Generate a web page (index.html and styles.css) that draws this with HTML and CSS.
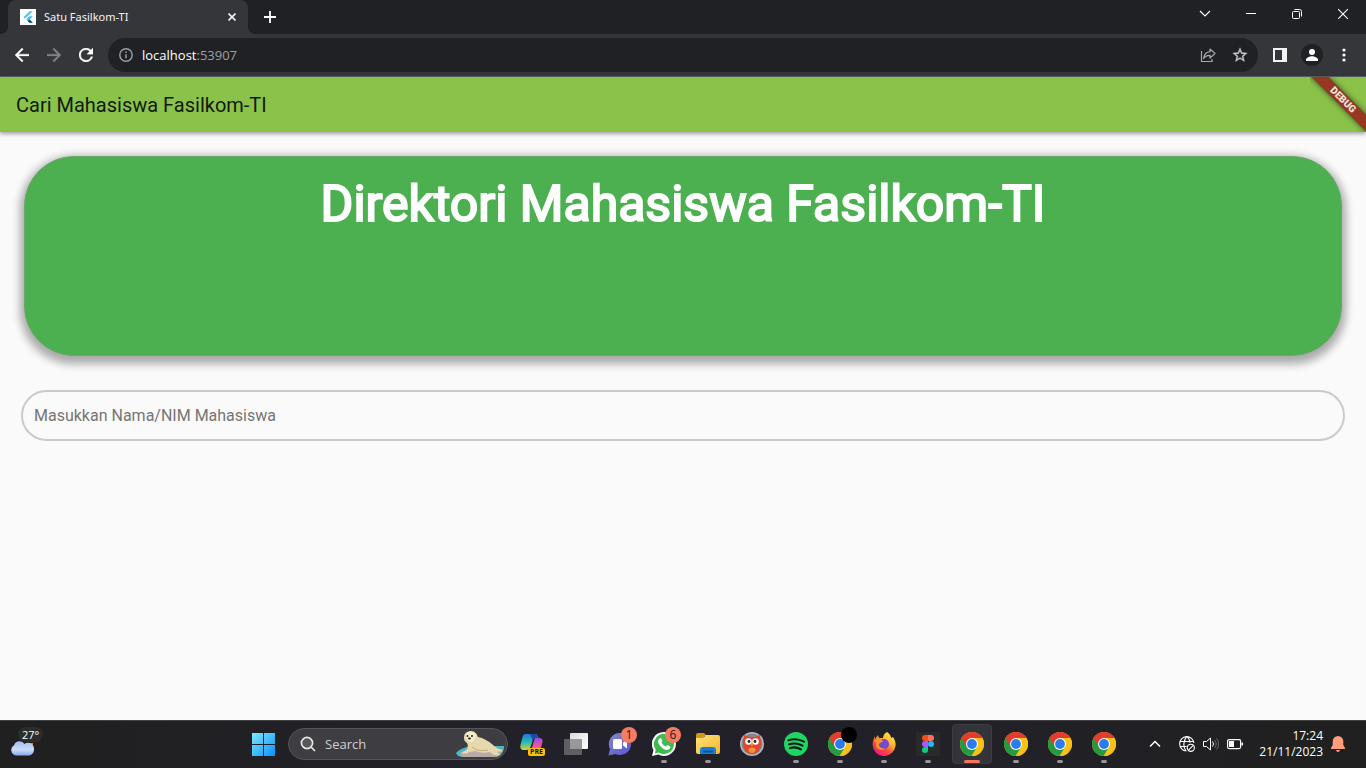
FILE: index.html
```html
<!DOCTYPE html>
<html lang="id">
<head>
<meta charset="utf-8">
<meta name="viewport" content="width=device-width, initial-scale=1">
<title>Satu Fasilkom-TI</title>
<link rel="stylesheet" href="styles.css">
</head>
<body>
<svg class="defs" aria-hidden="true">
  <symbol id="chrome" viewBox="0 0 24 24">
    <circle cx="12" cy="12" r="12" fill="#fbc116"/>
    <path d="M12 12 1.600 6A12 12 0 0 0 11.500 24L17.200 15z" fill="#249a41"/>
    <path d="M1.600 6A12 12 0 0 1 22.400 6H12L6.800 15z" fill="#e33b2e"/>
    <path d="M12 6H22.400A12 12 0 0 1 12 24L17.200 15z" fill="#fbc116"/>
    <circle cx="12" cy="12" r="6" fill="#fff"/>
    <circle cx="12" cy="12" r="4.900" fill="#2a7bee"/>
  </symbol>
</svg>

<header class="browser">
  <div class="tabstrip">
    <div class="tab">
      <svg class="favicon" viewBox="0 0 16 16"><rect width="16" height="16" fill="#fff"/><path d="M9.500 2.200h3.300L5 9.800 3.400 8.200z" fill="#54c5f8"/><path d="M9.500 7.300h3.300L9.500 10.600l3.300 3.200H9.500L6.300 10.600z" fill="#40b8f5"/><path d="M7.900 12.200l1.600-1.600 3.300 3.200H9.500z" fill="#12467f"/></svg>
      <span class="tab-title">Satu Fasilkom-TI</span>
      <button class="tab-close" aria-label="Close tab"><svg width="8" height="8" viewBox="0 0 8 8"><path d="M.5.500l7 7M7.500.500l-7 7" stroke="#f1f3f4" stroke-width="1.600"/></svg></button>
    </div>
    <button class="new-tab" aria-label="New tab"><svg width="12" height="12" viewBox="0 0 12 12"><path d="M6 0v12M0 6h12" stroke="#fff" stroke-width="1.800"/></svg></button>
    <div class="window-controls">
      <button aria-label="Search tabs"><svg width="12" height="12" viewBox="0 0 12 12"><path d="M1 3l5 5 5-5" fill="none" stroke="#fff" stroke-width="1.200"/></svg></button>
      <button aria-label="Minimize"><svg width="10" height="10" viewBox="0 0 10 10"><path d="M0 4.500h10" stroke="#fff"/></svg></button>
      <button aria-label="Restore"><svg width="10" height="10" viewBox="0 0 10 10" fill="none" stroke="#fff"><rect x=".5" y="2.500" width="7" height="7" rx="1"/><path d="M2.500.500H7.500a2 2 0 0 1 2 2v5"/></svg></button>
      <button aria-label="Close"><svg width="10" height="10" viewBox="0 0 10 10"><path d="M0 0l10 10M10 0L0 10" stroke="#fff" stroke-width="1.100"/></svg></button>
    </div>
  </div>
  <div class="toolbar">
    <nav class="nav-buttons">
      <button aria-label="Back"><svg width="14" height="14" viewBox="4 4 16 16"><path fill="#fff" stroke="#fff" stroke-width=".4" d="M20 11H7.830l5.590-5.590L12 4l-8 8 8 8 1.410-1.410L7.830 13H20z"/></svg></button>
      <button aria-label="Forward"><svg width="14" height="14" viewBox="4 4 16 16"><path fill="#818285" stroke="#818285" stroke-width=".4" d="M4 13h12.170l-5.590 5.590L12 20l8-8-8-8-1.410 1.410L16.170 11H4z"/></svg></button>
      <button aria-label="Reload"><svg width="14" height="14" viewBox="4 4 16 16"><path fill="#fff" stroke="#fff" stroke-width=".4" d="M17.650 6.350A8 8 0 1 0 19.730 14h-2.080A6 6 0 1 1 12 6c1.660 0 3.140.690 4.220 1.780L13 11h7V4z"/></svg></button>
    </nav>
    <div class="omnibox">
      <svg width="14" height="14" viewBox="0 0 14 14"><circle cx="7" cy="7" r="6.200" fill="none" stroke="#9aa0a6" stroke-width="1.400"/><path d="M7 6.200v4M7 3.500v1.500" stroke="#9aa0a6" stroke-width="1.500"/></svg>
      <span class="url">localhost<span class="port">:53907</span></span>
      <button aria-label="Share"><svg width="16" height="16" viewBox="0 0 16 16" fill="none" stroke="#a6a8ab" stroke-width="1.200"><path d="M1.500 4v10.500h10.500V12"/><path d="M10 2l5 4.500-5 4.500V8.300C7 8.200 5 9 3.600 11.500 4.200 7.500 6.500 5 10 4.700z" stroke-linejoin="round"/></svg></button>
      <button aria-label="Bookmark"><svg width="16" height="16" viewBox="1 1 22 22"><path fill="#c4c6c8" stroke="#c4c6c8" stroke-width=".5" d="M22 9.240l-7.190-.62L12 2 9.190 8.630 2 9.240l5.460 4.730L5.820 21 12 17.270 18.180 21l-1.630-7.030zM12 15.400l-3.760 2.270 1-4.280-3.320-2.880 4.380-.38L12 6.100l1.710 4.040 4.380.38-3.320 2.880 1 4.280z"/></svg></button>
    </div>
    <div class="tools">
      <button aria-label="Side panel"><svg width="14" height="14" viewBox="0 0 14 14"><path fill="#f1f3f4" fill-rule="evenodd" d="M0 0h14v14H0zM2 2v10h7V2z"/></svg></button>
      <button aria-label="Profile"><svg width="22" height="22" viewBox="0 0 22 22"><circle cx="11" cy="11" r="11" fill="#202124"/><circle cx="11" cy="8" r="3" fill="#fff"/><path d="M5 17v-1.500c0-2 4-3.300 6-3.300s6 1.300 6 3.300V17z" fill="#fff"/></svg></button>
      <button aria-label="Menu"><svg width="4" height="14" viewBox="0 0 4 14" fill="#fff"><circle cx="2" cy="2" r="1.600"/><circle cx="2" cy="7" r="1.600"/><circle cx="2" cy="12" r="1.600"/></svg></button>
    </div>
  </div>
</header>

<div class="app">
  <header class="app-bar">
    <h1 class="app-title">Cari Mahasiswa Fasilkom-TI</h1>
    <div class="debug-corner"><span class="debug-banner">DEBUG</span></div>
  </header>
  <main class="content">
    <section class="hero"><h2 class="hero-title">Direktori Mahasiswa Fasilkom-TI</h2></section>
    <input class="search-field" type="text" aria-label="Masukkan Nama/NIM Mahasiswa" placeholder="Masukkan Nama/NIM Mahasiswa">
  </main>
</div>

<footer class="taskbar">
  <button class="weather" aria-label="Weather">
    <svg width="24" height="16" viewBox="0 0 24 16"><defs><linearGradient id="cl" x2="0" y2="1"><stop offset="0" stop-color="#a5bdf0"/><stop offset=".6" stop-color="#cbdcf8"/><stop offset="1" stop-color="#84a9ee"/></linearGradient></defs><path d="M15 3h8v5z" fill="#e9832f"/><path d="M6 15.500A5.500 5.500 0 0 1 4 5.300 5.800 5.800 0 0 1 14.500 4 6 6 0 0 1 24 9.500c0 3.500-2.500 6-5.500 6z" fill="url(#cl)"/></svg>
    <span class="temp">27°</span>
  </button>
  <div class="dock">
    <button class="dock-item" aria-label="Start"><svg width="24" height="24" viewBox="0 0 24 24"><defs><linearGradient id="win" x2="1" y2="1"><stop offset="0" stop-color="#7cebff"/><stop offset="1" stop-color="#0a90f8"/></linearGradient></defs><path fill="url(#win)" d="M0 1h11v11H0zM12 1h11v11H12zM0 13h11v11H0zM12 13h11v11H12z"/></svg></button>
    <label class="search">
      <svg width="16" height="16" viewBox="0 0 16 16" fill="none" stroke="#e6e6e6" stroke-width="1.700"><circle cx="7" cy="7" r="5.600" fill="#56575b"/><path d="M11 11l4 4"/></svg>
      <input class="search-input" type="text" placeholder="Search">
      <svg class="seal" width="50" height="28" viewBox="0 0 50 28"><path d="M1 23c5-6 14-7 24-7h24v2c-1 5-4 9-9 9H8c-3 0-6-1-7-4z" fill="#47b6c9"/><path d="M5 23c5-3 20-5 43-4-2 5-4 8-9 8H10c-3 0-5-1-5-4z" fill="#b9aaa8"/><path d="M9 8c0-5 3-7 7-7s6 3 7 6c5 1 11 4 15 8 3 3 7 4 10 6-2 1-5 0-6 1 1 1 4 2 2 3-4 1-7-1-9-3-5 1-11 1-14-1l-7 1c-1 2-6 2-7 1s4-2 5-4c1-3 1-4 0-6-2-1-3-3-3-5z" fill="#e7d8ad"/><path d="M11 5c1-4 8-4 10 0-1 4-2 7-6 7-3-1-4-4-4-7z" fill="#f6edcf"/><path d="M17 17c4 4 10 4 16 3" stroke="#bfa973" fill="none"/><circle cx="12.500" cy="6" r="1" fill="#28221c"/><circle cx="17" cy="6" r="1" fill="#28221c"/><ellipse cx="14.500" cy="8.600" rx="1.500" ry="1" fill="#28221c"/></svg>
    </label>
    <button class="dock-item" aria-label="Copilot"><svg width="24" height="24" viewBox="0 0 24 24"><defs><linearGradient id="ca" x2="0" y2="1"><stop stop-color="#2476d8"/><stop offset=".5" stop-color="#22bbb4"/><stop offset="1" stop-color="#d6d03a"/></linearGradient><linearGradient id="cb" x2="0" y2="1"><stop stop-color="#9d4be4"/><stop offset=".6" stop-color="#ec5798"/><stop offset="1" stop-color="#fb8d50"/></linearGradient></defs><path d="M11 18l4-12h4c3 0 4 2 3.500 4l-2 7c-1 2-2 3-4 3h-7z" fill="url(#cb)"/><path d="M5.500 2h10c2 0 2 2 3 4h-3c-2 0-2.500 1-3 3l-2 6c-1 2-2 3-4 3H4c-3 0-4-2-3.500-5L2.500 5c.5-2 1.500-3 3-3z" fill="url(#ca)"/><path d="M10 2h5c2 0 2.500 2 3 4h-2c-2 0-2.500 1-3 3z" fill="#2148b8"/></svg><span class="pre">PRE</span></button>
    <button class="dock-item" aria-label="Task view"><svg width="24" height="24" viewBox="0 0 24 24"><defs><linearGradient id="tv" x2="1" y2="1"><stop stop-color="#ddd"/><stop offset="1" stop-color="#fff"/></linearGradient></defs><rect x="6" y="1" width="18" height="16" rx="1" fill="url(#tv)"/><rect y="7" width="18" height="16" rx="1" fill="#5f5f61"/><rect x="6" y="7" width="12" height="10" fill="#999"/></svg></button>
    <button class="dock-item" aria-label="Chat"><svg width="24" height="24" viewBox="0 0 24 24"><defs><linearGradient id="ch" x2="1" y2="1"><stop stop-color="#8787c8"/><stop offset="1" stop-color="#5555d2"/></linearGradient></defs><path d="M12 1a11 11 0 1 1-4.500 21L.500 23.500 2 17A11 11 0 0 1 12 1z" fill="url(#ch)"/><rect x="5" y="7" width="9" height="10" rx="1.500" fill="#fff"/><path d="M15 10.500l4-3v9l-4-3z" fill="#fff"/></svg><span class="badge">1</span></button>
    <button class="dock-item running" aria-label="WhatsApp"><svg width="24" height="24" viewBox="0 0 24 24"><path d="M12 0a12 12 0 1 1-5.700 22.600L0 24l1.500-6A12 12 0 0 1 12 0z" fill="#fff"/><path d="M12 2a10 10 0 1 1-5.300 18.500L2.800 21.500 3.800 17.800A10 10 0 0 1 12 2z" fill="#3dbb4f"/><path d="M8 6.500c1-.5 1.500 0 2 1.200.7 1.600.3 1.900-.5 2.900 1 2 2.500 3.200 4.500 4 1-1.400 1.200-1.700 2.300-1.200 2 .9 2.200 1.100 2 2-.5 2-3 2.900-4.800 2.300C9.500 16.500 6.500 12.500 6 9.500c0-1.200.8-2.500 2-3z" fill="#fff"/></svg><span class="badge">6</span></button>
    <button class="dock-item running" aria-label="File Explorer"><svg width="24" height="24" viewBox="0 0 24 24"><defs><linearGradient id="fo" x2="1" y2="1"><stop stop-color="#ffe27c"/><stop offset="1" stop-color="#f4b62b"/></linearGradient></defs><path d="M0 3q0-2 2-2h6l3 3h-3v5H0z" fill="#d39614"/><path d="M0 6h7l3-3h12q2 0 2 2v15q0 2-2 2H2q-2 0-2-2z" fill="url(#fo)"/><path d="M4 22v-4q0-3 3-3h10q3 0 3 3v4z" fill="#1380d5"/><path d="M7 19.500h10" stroke="#0c559c" stroke-width="2"/></svg></button>
    <button class="dock-item" aria-label="Owl"><svg width="24" height="24" viewBox="0 0 24 24"><circle cx="12" cy="12" r="12" fill="#b4b8c0"/><circle cx="12" cy="12" r="10.500" fill="#7f8794"/><path d="M4 3c3 1 4 2 8 2s5-1 8-2c0 3 1 4 1 8 0 6-3 10-9 11-6-1-9-5-9-11 0-4 1-5 1-8z" fill="#e3472b"/><path d="M8 17q4-3 8 0-1 4-4 4t-4-4z" fill="#f3913c"/><circle cx="8.500" cy="9.500" r="3.300" fill="#fff"/><circle cx="15.500" cy="9.500" r="3.300" fill="#fff"/><circle cx="9" cy="9.500" r="1.400" fill="#222"/><circle cx="15" cy="9.500" r="1.400" fill="#222"/><path d="M10.500 11h3L12 15z" fill="#f4a630"/></svg></button>
    <button class="dock-item running" aria-label="Spotify"><svg width="24" height="24" viewBox="0 0 24 24"><circle cx="12" cy="12" r="12" fill="#1ed760"/><path d="M4.500 8.200c5-1.500 11-1 15.500 1.500M5.200 12.200c4.500-1.300 9.500-.7 13.300 1.500M6 15.900c3.800-1 7.800-.5 11 1.400" stroke="#10181a" stroke-width="2.100" fill="none" stroke-linecap="round"/></svg></button>
    <button class="dock-item running" aria-label="Chrome"><svg width="24" height="24"><use href="#chrome"/></svg><span class="profile-dot"></span></button>
    <button class="dock-item running" aria-label="Firefox"><svg width="24" height="24" viewBox="0 0 24 24"><defs><linearGradient id="ff" x1="1" x2=".3" y2="1"><stop stop-color="#fff34f"/><stop offset=".4" stop-color="#ffbd2f"/><stop offset=".7" stop-color="#fc4b3c"/><stop offset="1" stop-color="#ef168b"/></linearGradient></defs><path d="M15 0c4 3 4 5 4 6l2-1c2 3 3 6 2.500 9A11.500 11.500 0 0 1 .600 13C.500 9 2 6 3 4v3l3-4c0 2 1 3 2 3h3c0-3 2-5 4-6z" fill="url(#ff)"/><circle cx="12" cy="12" r="5" fill="#7549d2"/><path d="M2 9c2-2 6-2 9 0-1 2-3 1-4 3-1 3 3 5 6 4-4 4-10 1-9-5z" fill="#ff9422"/></svg></button>
    <button class="dock-item running" aria-label="Figma"><svg width="24" height="24" viewBox="0 0 24 24"><rect width="24" height="24" rx="2" fill="#292b2a"/><path d="M12 3H9a3 3 0 0 0 0 6h3z" fill="#f24e1e"/><path d="M12 3h3a3 3 0 0 1 0 6h-3z" fill="#ff7262"/><path d="M12 9H9a3 3 0 0 0 0 6h3z" fill="#a259ff"/><circle cx="15" cy="12" r="3" fill="#1abcfe"/><path d="M12 15H9a3 3 0 1 0 3 3z" fill="#0acf83"/></svg></button>
    <button class="dock-item running active" aria-label="Chrome, Satu Fasilkom-TI"><svg width="24" height="24"><use href="#chrome"/></svg></button>
    <button class="dock-item running" aria-label="Chrome window 2"><svg width="24" height="24"><use href="#chrome"/></svg></button>
    <button class="dock-item running" aria-label="Chrome window 3"><svg width="24" height="24"><use href="#chrome"/></svg></button>
    <button class="dock-item running" aria-label="Chrome window 4"><svg width="24" height="24"><use href="#chrome"/></svg></button>
  </div>
  <div class="tray">
    <button class="tray-more" aria-label="Hidden icons"><svg width="12" height="8" viewBox="0 0 12 8"><path d="M1 6.500l5-5 5 5" fill="none" stroke="#fff" stroke-width="1.500"/></svg></button>
    <button class="tray-status" aria-label="Network, volume, battery">
      <svg width="16" height="16" viewBox="0 0 16 16" fill="none" stroke="#fff" stroke-width="1.100"><path d="M7.500 15A7.200 7.200 0 1 1 15 7M1 5.500h13.500M1 10.500h6.500M7.500.800C4 5 4 11 7 15M8.500.800c1.700 2 2.500 4 2.500 6"/><circle cx="11.800" cy="11.800" r="3.600"/><path d="M9.400 14.200l4.900-4.900"/></svg>
      <svg width="16" height="14" viewBox="0 0 16 14" fill="none" stroke="#fff"><path d="M.5 4.500h3L7.500 1v12L3.500 9.500h-3z"/><path d="M9.500 4.500q2 2.500 0 5"/><path d="M11.500 3q3.500 4 0 8M13.500 1.500q4.500 5.500 0 11" stroke="#69696a"/></svg>
      <svg width="16" height="12" viewBox="0 0 16 12"><rect x=".6" y="1.600" width="13" height="9" rx="1.500" fill="none" stroke="#fff" stroke-width="1.200"/><path d="M2 3h5v6H2zM14.500 4.500H16v3h-1.500z" fill="#fff"/></svg>
    </button>
    <button class="clock"><span>17:24</span><span>21/11/2023</span></button>
    <button class="bell" aria-label="Notifications"><svg width="14" height="16" viewBox="0 0 14 16" fill="#fd9d7c"><path d="M7 0a5.300 5.300 0 0 1 5.300 5.300V9L14 12v1H0v-1l1.700-3V5.300A5.300 5.300 0 0 1 7 0zM5 14h4q-.5 2-2 2t-2-2z"/></svg></button>
  </div>
</footer>
</body>
</html>
```
FILE: styles.css
```css
* { box-sizing: border-box; }

body {
  margin: 0;
  min-height: 100vh;
  display: flex;
  flex-direction: column;
  background: #fafafa;
  font-family: "Open Sans", "Noto Sans", sans-serif;
}

button {
  display: flex;
  align-items: center;
  justify-content: center;
  margin: 0;
  padding: 0;
  border: 0;
  background: none;
  color: inherit;
  font: inherit;
}

svg { display: block; flex: none; }
.defs { position: absolute; width: 0; height: 0; }

/* Browser frame */
.tabstrip {
  display: flex;
  height: 34px;
  padding-left: 8px;
  background: #202124;
}

.tab {
  position: relative;
  display: flex;
  align-items: center;
  width: 240px;
  padding: 0 12px;
  border-radius: 8px 8px 0 0;
  background: #35363a;
  color: #f1f3f4;
  font-size: 12px;
}

.tab::before,
.tab::after {
  content: "";
  position: absolute;
  bottom: 0;
  width: 8px;
  height: 8px;
}
.tab::before { left: -8px; background: radial-gradient(circle at 0 0, #202124 8px, #35363a 8px); }
.tab::after { right: -8px; background: radial-gradient(circle at 100% 0, #202124 8px, #35363a 8px); }

.favicon { width: 16px; height: 16px; }
.tab-title { flex: 1; padding: 0 0 2px 8px; font-family: "Noto Sans", sans-serif; font-size: 11px; }
.tab-close { width: 8px; height: 16px; }
.new-tab { width: 28px; margin-left: 8px; }
.window-controls { display: flex; margin-left: auto; padding-bottom: 6px; }
.window-controls button { width: 46px; }

.toolbar {
  display: flex;
  align-items: center;
  height: 43px;
  padding: 0 6px;
  border-bottom: 1px solid #5b5c60;
  background: #35363a;
}
.nav-buttons, .tools { display: flex; align-items: center; }
.nav-buttons button, .tools button { width: 32px; height: 32px; }

.omnibox {
  flex: 1;
  display: flex;
  align-items: center;
  height: 34px;
  margin: 0 6px;
  padding: 0 2px 0 11px;
  border-radius: 17px;
  background: #202124;
  font-size: 13px;
}
.omnibox button { width: 32px; height: 32px; }
.url { flex: 1; padding-left: 9px; color: #fff; }
.port { color: #9aa0a6; }

/* Application */
.app { flex: 1; font-family: Roboto, sans-serif; }

.app-bar {
  position: relative;
  display: flex;
  align-items: center;
  height: 55px;
  padding: 0 16px;
  background: #8bc34a;
  box-shadow: 0 2px 4px rgba(0, 0, 0, .35);
}
.app-title { margin: 0; font-size: 20px; font-weight: 400; color: #12190a; }

.debug-corner {
  position: absolute;
  top: 0;
  right: 0;
  width: 56px;
  height: 55px;
  overflow: hidden;
}
.debug-banner {
  position: absolute;
  top: 17px;
  left: -17px;
  width: 100px;
  height: 12px;
  background: #963821;
  box-shadow: 0 0 6px rgba(0, 0, 0, .6);
  color: #f3e4df;
  font-size: 10px;
  font-weight: 900;
  line-height: 12px;
  text-align: center;
  transform: rotate(45deg);
}

.content {
  display: flex;
  flex-direction: column;
  gap: 34px;
  padding: 24px 21px;
}

.hero {
  height: 200px;
  margin: 0 3px;
  padding-top: 17px;
  border: 1px solid #6ba76d;
  border-radius: 50px;
  background: #4caf50;
  box-shadow: 0 4px 8px 4px rgba(0, 0, 0, .32);
  text-align: center;
}
.hero-title {
  margin: 0;
  color: #fff;
  font-size: 50px;
  font-weight: 400;
  line-height: 60px;
  -webkit-text-stroke: 2px #fff;
}

.search-field {
  width: 100%;
  height: 51px;
  padding: 0 11px;
  border: 2px solid #cacaca;
  border-radius: 26px;
  background: transparent;
  color: #222;
  font-family: Roboto, sans-serif;
  font-size: 16px;
}
.search-field::placeholder { color: #757575; }

/* Taskbar */
.taskbar {
  display: grid;
  grid-template-columns: 1fr auto 1fr;
  height: 48px;
  padding-bottom: 1px;
  border-top: 1px solid #414144;
  background: linear-gradient(90deg, #202020, #22212a 40%, #22212a 60%, #202020);
  color: #fff;
  font-size: 12px;
}

.weather {
  position: relative;
  justify-self: start;
  padding: 7px 0 0 10px;
}
.temp {
  position: absolute;
  top: 6px;
  left: 18px;
  padding: 0 4px;
  border-radius: 8px;
  background: rgba(45, 45, 45, .9);
  font-size: 11px;
  line-height: 15px;
}

.dock { display: flex; margin-left: 2px; }
.dock-item { position: relative; width: 44px; }
.dock-item.running::after {
  content: "";
  position: absolute;
  bottom: 4px;
  left: 19px;
  width: 6px;
  height: 3px;
  border-radius: 2px;
  background: #969698;
}
.dock-item.active::before {
  content: "";
  position: absolute;
  inset: 3px 2px;
  border: 1px solid #3e3d44;
  border-radius: 4px;
  background: #34333a;
}
.dock-item.active svg { position: relative; }
.dock-item.active::after { left: 14px; width: 16px; background: #f4775a; }

.badge {
  position: absolute;
  top: 6px;
  right: 5px;
  width: 16px;
  height: 16px;
  border-radius: 50%;
  background: #f47c62;
  color: #201c1c;
  line-height: 16px;
}
.pre {
  position: absolute;
  bottom: 11px;
  right: 9px;
  padding: 0 2px;
  border-radius: 2px;
  background: #fdc20f;
  color: #111;
  font-size: 7px;
  font-weight: 700;
  line-height: 8px;
}
.profile-dot {
  position: absolute;
  top: 6px;
  right: 5px;
  width: 16px;
  height: 16px;
  border-radius: 50%;
  background: #000;
}

.search {
  display: flex;
  align-items: center;
  align-self: center;
  width: 220px;
  height: 32px;
  margin: 0 2px;
  padding: 0 2px 0 11px;
  border: 1px solid #555459;
  border-radius: 16px;
  background: #3e3d42;
}
.search-input {
  flex: 1;
  min-width: 0;
  padding: 0 0 0 9px;
  border: 0;
  background: none;
  color: #fff;
  font-family: "Open Sans", sans-serif;
  font-size: 13px;
}
.search-input::placeholder { color: #cfcfd1; }

.tray {
  display: flex;
  align-items: stretch;
  justify-self: end;
  padding-right: 21px;
}
.tray-more { width: 32px; }
.tray-status { gap: 8px; padding: 0 8px; }
.clock {
  flex-direction: column;
  align-items: flex-end;
  padding: 0 8px;
  font-size: 12px;
  line-height: 16px;
}
```
